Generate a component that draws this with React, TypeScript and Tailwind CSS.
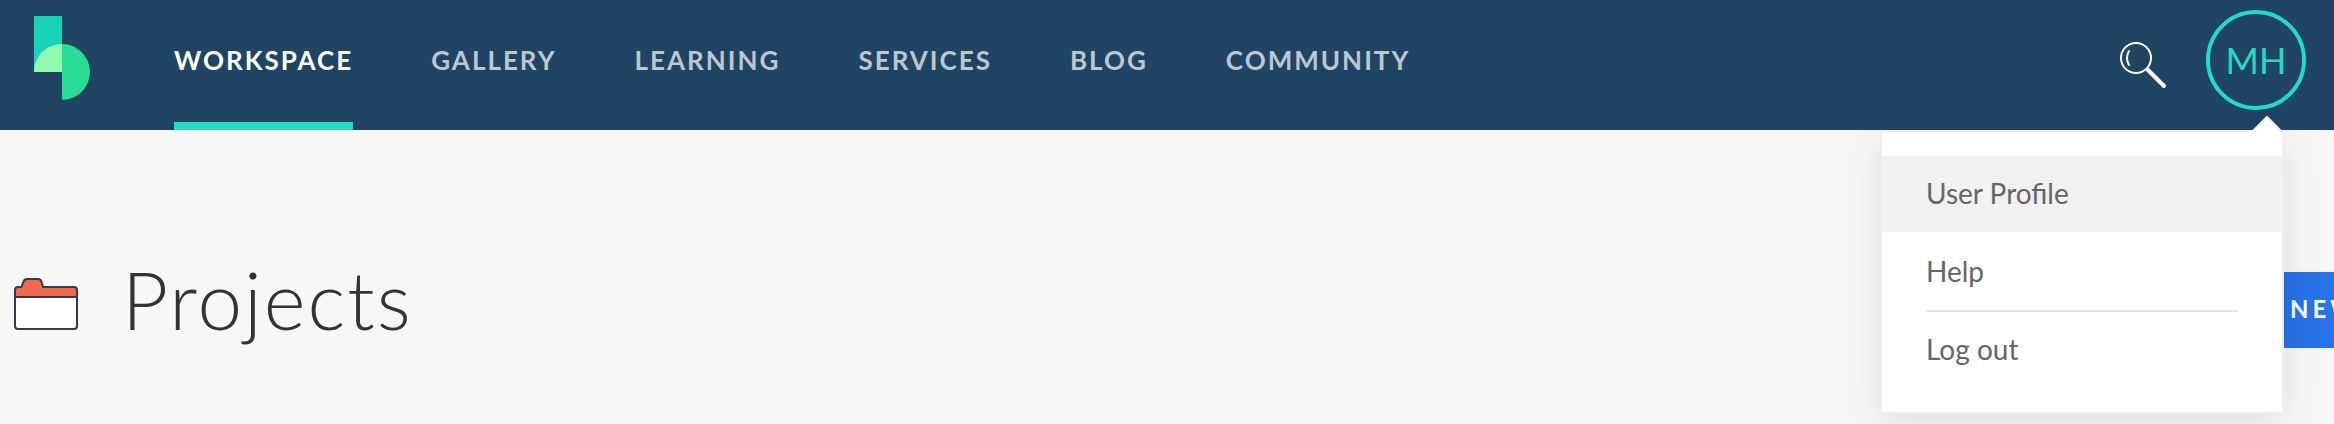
const NAV = ['Workspace', 'Gallery', 'Learning', 'Services', 'Blog', 'Community'];

function Logo() {
  return (
    <svg viewBox="0 0 56 84" className="h-[84px] w-14" aria-hidden="true">
      <path d="M1 0H27a1 1 0 0 1 1 1V56H0V1a1 1 0 0 1 1-1z" fill="#17d3b8" />
      <path d="M28 28a28 28 0 0 1 1.500 55.960A1.500 1.500 0 0 1 28 82.500z" fill="#27dd93" />
      <path d="M28 28V56H1a1 1 0 0 1-1-1A28 27 0 0 1 28 28z" fill="#92fab1" />
    </svg>
  );
}

function SearchIcon() {
  return (
    <svg viewBox="0 0 48 48" className="size-12" fill="none" stroke="#fff" strokeLinecap="round" aria-hidden="true">
      <circle cx="17" cy="17" r="15" strokeWidth="2" />
      <path d="M10 10q-4 7 0 14" strokeWidth="2" />
      <path d="M28.500 28.500L45 45" strokeWidth="4" />
    </svg>
  );
}

function FolderIcon() {
  return (
    <svg viewBox="0 0 64 52" className="mt-[26px] h-[52px] w-16 shrink-0" aria-hidden="true">
      <path d="M1 19H63V48a3 3 0 0 1-3 3H4a3 3 0 0 1-3-3z" fill="#fff" />
      <path d="M1 19V12a3 3 0 0 1 3-3H7.500L9.500 3.500Q10.500 1 13 1H24Q26.500 1 27.500 3.500L29 9H60a3 3 0 0 1 3 3V19z" fill="#ef6b50" />
      <path
        d="M1 19V12a3 3 0 0 1 3-3H7.500L9.500 3.500Q10.500 1 13 1H24Q26.500 1 27.500 3.500L29 9H60a3 3 0 0 1 3 3V48a3 3 0 0 1-3 3H4a3 3 0 0 1-3-3V19H63"
        fill="none"
        stroke="#353a48"
        strokeWidth="2"
        strokeLinejoin="round"
      />
    </svg>
  );
}

function UserMenu() {
  return (
    <div className="absolute top-full right-[50px] z-10 w-[404px] border-2 border-[#eeeeee] bg-white bg-clip-padding py-6 shadow-[0_10px_40px_rgba(0,0,0,0.1)]">
      <svg viewBox="0 0 32 18" className="absolute -top-[17px] -right-[1px] h-[18px] w-8" aria-hidden="true">
        <path d="M1 17L16 2L31 17V18H1z" fill="#fff" />
        <path d="M1 17L16 2L31 17" fill="none" stroke="#eeeeee" strokeWidth="2" />
      </svg>
      <nav aria-label="User" className="flex flex-col text-[28px] leading-[74px] text-[#666666]">
        <a href="#profile" className="bg-[#f1f1f1] px-11 pb-0.5">User Profile</a>
        <a href="#help" className="mt-0.5 px-11 pb-0.5">Help</a>
        <hr className="mx-11 border-t-2 border-[#e4e4e4]" />
        <a href="#logout" className="px-11 pb-0.5">Log out</a>
      </nav>
    </div>
  );
}

export default function App() {
  return (
    <div className="min-h-screen overflow-hidden bg-[#f7f7f7] font-[Lato,sans-serif]">
      <header className="relative flex h-[130px] items-stretch bg-[#204464] pr-7 pl-[34px]">
        <a href="#home" aria-label="Home" className="mr-[84px] pt-4">
          <Logo />
        </a>
        <nav aria-label="Main" className="flex gap-[78px] text-[26px] leading-[120px] font-bold tracking-[2px] uppercase">
          {NAV.map((label, i) => (
            <a
              key={label}
              href={'#' + label.toLowerCase()}
              className={i === 0 ? 'border-b-8 border-[#25dac5] text-white' : 'text-[#bcc7d1]'}
            >
              {label}
            </a>
          ))}
        </nav>
        <div className="ml-auto flex items-start gap-[39px] pt-2.5">
          <button type="button" aria-label="Search" className="mt-[31px]">
            <SearchIcon />
          </button>
          <button
            type="button"
            aria-haspopup="menu"
            aria-expanded="true"
            className="size-[100px] rounded-full border-4 border-[#25dac5] text-4xl text-[#25dac5]"
          >
            MH
          </button>
        </div>
        <UserMenu />
      </header>
      <main className="flex items-start pt-[122px] pl-3.5">
        <FolderIcon />
        <h1 className="ml-[44px] text-[80px] leading-[94px] font-light tracking-[2px] text-[#333333]">Projects</h1>
        <button
          type="button"
          className="mt-5 -mr-[60px] ml-auto h-[76px] w-[144px] bg-[#2873e8] pb-0.5 pl-10 text-left text-2xl font-bold tracking-[4px] whitespace-nowrap text-white"
        >
          NEW
        </button>
      </main>
    </div>
  );
}
